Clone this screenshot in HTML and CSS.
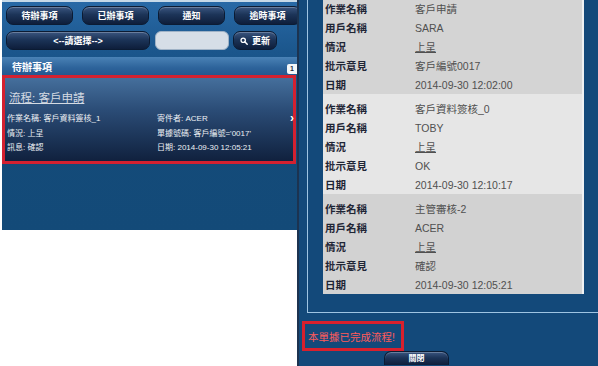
FILE: index.html
```html
<!DOCTYPE html>
<html lang="zh-Hant">
<head>
<meta charset="utf-8">
<title>待辦事項</title>
<link rel="stylesheet" href="styles.css">
</head>
<body>
<div class="page">
  <div class="left">
    <div class="app">
      <div class="tabs">
        <div class="btn tab">待辦事項</div>
        <div class="btn tab">已辦事項</div>
        <div class="btn tab">通知</div>
        <div class="btn tab">逾時事項</div>
      </div>
      <div class="tools">
        <div class="btn select">&lt;--請選擇--&gt;</div>
        <div class="search"></div>
        <div class="btn refresh">
          <svg class="icon" viewBox="0 0 10 10" width="8" height="8"><circle cx="4" cy="4" r="2.7" fill="none" stroke="#fff" stroke-width="1.6"/><path d="M6 6 L9 9" stroke="#fff" stroke-width="1.8" stroke-linecap="round"/></svg>
          <span>更新</span>
        </div>
      </div>
      <div class="listhead">
        <span>待辦事項</span>
        <span class="badge">1</span>
      </div>
      <div class="item">
        <div class="title">流程: 客戶申請</div>
        <div class="grid">
          <div>作業名稱: 客戶資料簽核_1</div>
          <div>寄件者: ACER</div>
          <div>情況: 上呈</div>
          <div>單據號碼: 客戶編號='0017'</div>
          <div>訊息: 確認</div>
          <div>日期: 2014-09-30 12:05:21</div>
        </div>
        <span class="chev">&#x203A;</span>
      </div>
    </div>
  </div>
  <div class="right">
    <div class="box">
      <div class="cards">
        <div class="card c1">
          <div class="row"><span class="lab">作業名稱</span><span class="val">客戶申請</span></div>
          <div class="row"><span class="lab">用戶名稱</span><span class="val">SARA</span></div>
          <div class="row"><span class="lab">情況</span><span class="val link">上呈</span></div>
          <div class="row"><span class="lab">批示意見</span><span class="val">客戶編號0017</span></div>
          <div class="row"><span class="lab">日期</span><span class="val">2014-09-30 12:02:00</span></div>
        </div>
        <div class="card c2">
          <div class="row"><span class="lab">作業名稱</span><span class="val">客戶資料簽核_0</span></div>
          <div class="row"><span class="lab">用戶名稱</span><span class="val">TOBY</span></div>
          <div class="row"><span class="lab">情況</span><span class="val link">上呈</span></div>
          <div class="row"><span class="lab">批示意見</span><span class="val">OK</span></div>
          <div class="row"><span class="lab">日期</span><span class="val">2014-09-30 12:10:17</span></div>
        </div>
        <div class="card c3">
          <div class="row"><span class="lab">作業名稱</span><span class="val">主管審核-2</span></div>
          <div class="row"><span class="lab">用戶名稱</span><span class="val">ACER</span></div>
          <div class="row"><span class="lab">情況</span><span class="val link">上呈</span></div>
          <div class="row"><span class="lab">批示意見</span><span class="val">確認</span></div>
          <div class="row"><span class="lab">日期</span><span class="val">2014-09-30 12:05:21</span></div>
        </div>
      </div>
    </div>
    <div class="done">本單據已完成流程!</div>
    <div class="btn close">關閉</div>
  </div>
</div>
</body>
</html>
```

FILE: styles.css
```css
html, body {
  margin: 0;
  padding: 0;
  background: #ffffff;
}
body {
  font-family: "Liberation Sans", "Noto Sans CJK TC", sans-serif;
  width: 598px;
  height: 366px;
  overflow: hidden;
}
.page {
  display: flex;
  width: 598px;
  height: 366px;
}
.left {
  width: 295px;
  padding-left: 2px;
  flex: none;
}
.app {
  height: 228px;
  border-top: 2px solid #c6d9e8;
  background: linear-gradient(#2869a6 0px, #1b568c 50px, #144b7a 110px, #134a78 230px);
  overflow: hidden;
  display: flex;
  flex-direction: column;
}
.btn {
  box-sizing: border-box;
  height: 19px;
  border-radius: 7px;
  border: 1px solid #0b1b33;
  background: linear-gradient(#3a557f 0%, #1c3458 45%, #0e1e3b 100%);
  box-shadow: inset 0 1px 0 rgba(255,255,255,0.25);
  color: #ffffff;
  font-weight: bold;
  font-size: 9px;
  display: flex;
  align-items: center;
  justify-content: center;
  flex: none;
}
.tabs {
  display: flex;
  gap: 9px;
  padding: 4px 0 0 4px;
}
.tab {
  width: 67px;
}
.tools {
  display: flex;
  padding: 6px 0 0 4px;
}
.select {
  width: 144px;
}
.search {
  width: 74px;
  height: 19px;
  box-sizing: border-box;
  margin-left: 5px;
  border-radius: 6px;
  background: #d6dee7;
  border: 1px solid #9fb2c6;
}
.refresh {
  width: 44px;
  margin-left: 4px;
  gap: 4px;
}
.icon {
  display: block;
}
.listhead {
  margin-top: 7px;
  height: 18px;
  background: linear-gradient(#4a82b6, #2d639a 60%, #245890);
  color: #ffffff;
  font-weight: bold;
  font-size: 10px;
  display: flex;
  align-items: center;
  justify-content: space-between;
  padding-left: 10px;
  flex: none;
}
.badge {
  background: #f4f6f8;
  color: #1d2b3c;
  font-size: 7px;
  width: 10px;
  height: 10px;
  margin-top: 5px;
  border-radius: 2px 0 0 2px;
  display: flex;
  align-items: center;
  justify-content: center;
}
.item {
  position: relative;
  width: 294px;
  height: 89px;
  box-sizing: border-box;
  border: 3px solid #d42130;
  background: linear-gradient(#456f9c 0%, #2a4b75 40%, #10213e 100%);
  padding: 10px 0 0 2px;
  color: #eef1f5;
  flex: none;
}
.title {
  font-size: 11.5px;
  color: #d5dbe3;
  text-decoration: underline;
  margin-left: 2px;
  height: 20px;
  line-height: 20px;
}
.grid {
  display: grid;
  grid-template-columns: 150px 1fr;
  row-gap: 0;
  margin-top: 4px;
  font-size: 8px;
  line-height: 14.5px;
}
.chev {
  position: absolute;
  right: -1px;
  top: 33px;
  font-size: 12px;
  font-weight: bold;
  color: #ffffff;
}
.right {
  flex: 1;
  border-left: 2px solid #1c3350;
  background: #13497a;
  display: flex;
  flex-direction: column;
  overflow: hidden;
}
.box {
  margin-left: 8px;
  border-left: 1px solid #9ec4e2;
  border-bottom: 1px solid #9ec4e2;
  padding: 0 14px 18px 15px;
}
.cards {
  margin-top: -6px;
}
.card {
  height: 100px;
  box-sizing: border-box;
  padding: 5px 0 0 2px;
  border-right: 2px solid #eef1f3;
}
.c1 { background: #d4d4d4; }
.c2 { background: #e6e6e6; }
.c3 { background: #d2d2d2; }
.row {
  display: flex;
  height: 19px;
  align-items: center;
  font-size: 10.5px;
}
.lab {
  width: 90px;
  color: #1f2535;
  font-weight: bold;
}
.val {
  color: #505050;
}
.link {
  text-decoration: underline;
}
.done {
  margin: 8px 0 0 3px;
  width: 102px;
  height: 30px;
  box-sizing: border-box;
  border: 3px solid #d8202d;
  color: #ff5b5b;
  font-size: 10.5px;
  display: flex;
  align-items: center;
  padding-left: 3px;
  flex: none;
}
.close {
  margin-left: 85px;
  width: 65px;
  height: 14px;
  border-radius: 7px 7px 0 0;
  border-bottom: 0;
  font-size: 8px;
  line-height: 10px;
  padding-top: 1px;
}
```
